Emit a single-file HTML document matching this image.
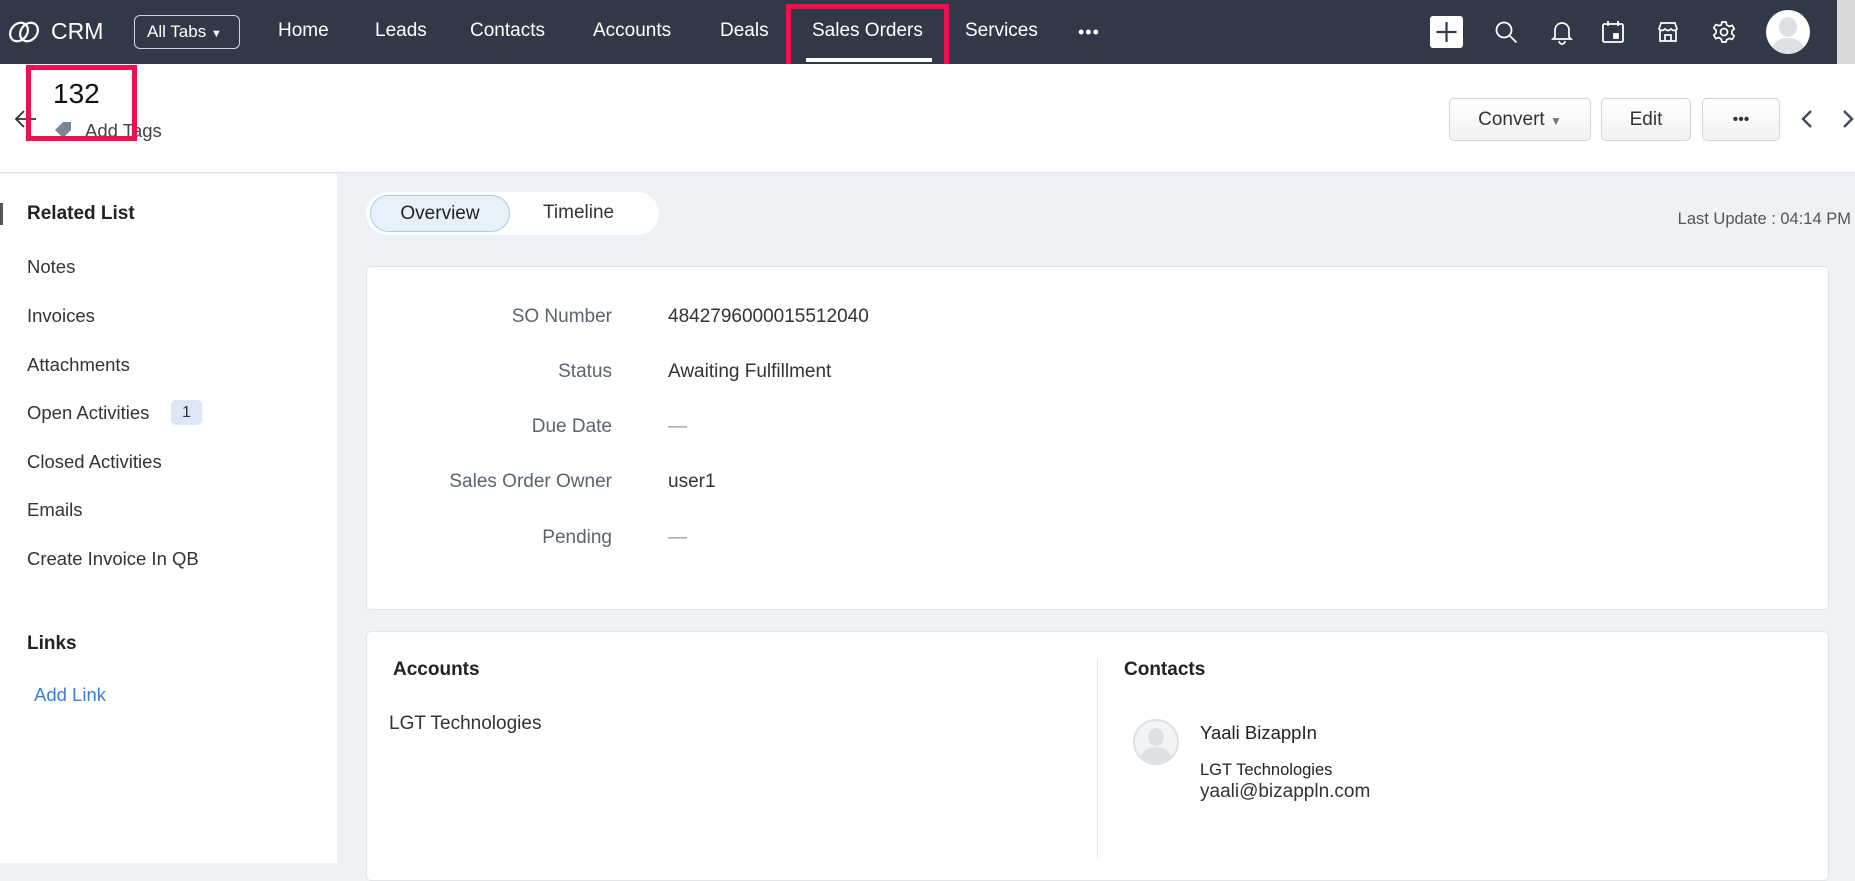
<!DOCTYPE html>
<html><head><meta charset="utf-8"><style>
*{margin:0;padding:0;box-sizing:border-box}
body{width:1855px;height:863px;overflow:hidden;background:#eef1f5;font-family:"Liberation Sans",sans-serif;color:#222;position:relative}
.a{position:absolute;white-space:nowrap}
.top{position:absolute;left:0;top:0;width:1855px;height:64px;background:#313949}
.nav{color:#fff;font-size:19px;top:20px}
.hdr{position:absolute;left:0;top:64px;width:1855px;height:109px;background:#fff;border-bottom:1px solid #dfe3e8}
.side{position:absolute;left:0;top:174px;width:337px;height:689px;background:#fff}
.si{left:27px;font-size:18.5px;color:#333}
.btn{position:absolute;top:98px;height:43px;border:1px solid #cfd4da;border-radius:5px;background:linear-gradient(#fff,#f0f2f4);font-size:19px;color:#333;text-align:center;line-height:41px}
.card{position:absolute;background:#fff;border:1px solid #e1e5ea;border-radius:5px}
.lb{font-size:19px;color:#5c6370;right:1243px;text-align:right}
.vl{font-size:19px;color:#333;left:668px}
</style></head><body>
<div class="top"></div>
<svg class="a" style="left:8px;top:19px" width="32" height="26" viewBox="0 0 32 26"><g fill="none" stroke="#fff" stroke-width="2.2"><ellipse cx="11" cy="13" rx="8" ry="10" transform="rotate(40 11 13)"/><ellipse cx="21" cy="13" rx="8" ry="10" transform="rotate(40 21 13)"/></g></svg>
<div class="a" style="left:51px;top:18px;color:#fff;font-size:23px">CRM</div>
<div class="a" style="left:134px;top:15px;width:106px;height:34px;border:1px solid #cfd4da;border-radius:6px;color:#fff;font-size:17px;line-height:32px;padding-left:12px">All Tabs <span style="font-size:11px">▼</span></div>
<div class="a nav" style="left:278px">Home</div>
<div class="a nav" style="left:375px">Leads</div>
<div class="a nav" style="left:470px">Contacts</div>
<div class="a nav" style="left:593px">Accounts</div>
<div class="a nav" style="left:720px">Deals</div>
<div class="a nav" style="left:812px">Sales Orders</div>
<div class="a" style="left:806px;top:58px;width:126px;height:4px;background:#fff"></div>
<div class="a nav" style="left:965px">Services</div>
<div class="a nav" style="left:1078px;top:22px;font-size:18px;letter-spacing:1px">•••</div>
<div class="a" style="left:786px;top:4px;width:163px;height:69px;border:5px solid #f0104f"></div>
<div class="a" style="left:1430px;top:16px;width:33px;height:32px;background:#fff;border-radius:3px"></div>
<svg class="a" style="left:1430px;top:16px" width="33" height="32"><path d="M16.5 6v20M6.5 16h20" stroke="#313949" stroke-width="2.2"/></svg>
<svg class="a" style="left:1494px;top:20px" width="26" height="26" fill="none" stroke="#fff" stroke-width="1.8"><circle cx="10" cy="10" r="7.5"/><path d="M15.5 15.5l7 7"/></svg>
<svg class="a" style="left:1550px;top:19px" width="24" height="26" fill="none" stroke="#fff" stroke-width="1.7"><path d="M5 18V11a7 7 0 0 1 14 0v7l2 2H3z"/><path d="M9 22a3 3 0 0 0 6 0"/></svg>
<svg class="a" style="left:1601px;top:19px" width="24" height="26" fill="none" stroke="#fff" stroke-width="1.8"><rect x="2" y="5" width="20" height="18" rx="1.5"/><path d="M7 2v5M17 2v5"/><rect x="13" y="15" width="4" height="4" fill="#fff"/></svg>
<svg class="a" style="left:1656px;top:20px" width="24" height="24" fill="none" stroke="#fff" stroke-width="1.7"><path d="M3 9l2-6h14l2 6q-3 3-6 0q-3 3-6 0q-3 3-6 0zM4 10v11h16V10M9 21v-6h6v6"/></svg>
<svg class="a" style="left:1712px;top:20px" width="24" height="24" fill="none" stroke="#fff" stroke-width="1.7"><circle cx="12" cy="12" r="3.5"/><path d="M10 2h4l.7 3 2.5 1.4 3-1 2 3.4-2.3 2.2v2.8l2.3 2.2-2 3.4-3-1-2.5 1.4L14 22h-4l-.7-3-2.5-1.4-3 1-2-3.4 2.3-2.2v-2.8L1.8 8l2-3.4 3 1L9.3 5z"/></svg>
<div class="a" style="left:1766px;top:10px;width:44px;height:44px;border-radius:50%;background:#fff;overflow:hidden"><div style="position:absolute;left:13px;top:7px;width:18px;height:20px;border-radius:50%;background:#dde0e5"></div><div style="position:absolute;left:6px;top:28px;width:32px;height:24px;border-radius:50%;background:#dde0e5"></div></div>
<div class="a" style="left:1837px;top:0;width:18px;height:64px;background:#d8d9db"></div>

<div class="hdr"></div>
<svg class="a" style="left:14px;top:108px" width="26" height="22" fill="none" stroke="#333" stroke-width="1.8"><path d="M10 3l-8 8 8 8M2 11h20"/></svg>
<div class="a" style="left:53px;top:78px;font-size:28px;color:#111">132</div>
<svg class="a" style="left:53px;top:120px" width="22" height="20"><path d="M2 10l8-8h8v8l-8 8z" fill="#7b8794"/></svg>
<div class="a" style="left:85px;top:120px;font-size:18.5px;color:#444">Add Tags</div>
<div class="a" style="left:26px;top:65px;width:111px;height:76px;border:5px solid #f0104f"></div>
<div class="btn" style="left:1449px;width:142px">Convert <span style="font-size:12px;color:#777">▼</span></div>
<div class="btn" style="left:1601px;width:90px">Edit</div>
<div class="btn" style="left:1702px;width:78px;font-size:16px">•••</div>
<svg class="a" style="left:1799px;top:108px" width="16" height="22" fill="none" stroke="#3c4a5a" stroke-width="2.4"><path d="M12 3l-8 8 8 8"/></svg>
<svg class="a" style="left:1840px;top:108px" width="16" height="22" fill="none" stroke="#3c4a5a" stroke-width="2.4"><path d="M4 3l8 8-8 8"/></svg>

<div class="side"></div>
<div class="a" style="left:0;top:203px;width:3px;height:22px;background:#555"></div>
<div class="a si" style="top:203px;font-weight:bold;color:#222;font-size:19px">Related List</div>
<div class="a si" style="top:256px">Notes</div>
<div class="a si" style="top:305px">Invoices</div>
<div class="a si" style="top:354px">Attachments</div>
<div class="a si" style="top:402px">Open Activities</div>
<div class="a" style="left:171px;top:400px;width:31px;height:25px;border-radius:5px;background:#dde6f5;font-size:16px;text-align:center;line-height:25px;color:#333">1</div>
<div class="a si" style="top:451px">Closed Activities</div>
<div class="a si" style="top:499px">Emails</div>
<div class="a si" style="top:548px">Create Invoice In QB</div>
<div class="a si" style="top:633px;font-weight:bold;color:#222;font-size:19px">Links</div>
<div class="a si" style="left:34px;top:684px;color:#3a7fd5">Add Link</div>

<div class="a" style="left:366px;top:192px;width:293px;height:43px;border-radius:22px;background:#fff"></div>
<div class="a" style="left:370px;top:195px;width:140px;height:37px;border-radius:19px;background:#e6f1fb;border:1px solid #a9cdf0;font-size:19px;text-align:center;line-height:35px;color:#222">Overview</div>
<div class="a" style="left:543px;top:202px;font-size:19px;color:#333">Timeline</div>
<div class="a" style="right:4px;top:210px;font-size:16.5px;color:#555">Last Update : 04:14 PM</div>

<div class="card" style="left:366px;top:266px;width:1463px;height:344px"></div>
<div class="a lb" style="top:306px">SO Number</div><div class="a vl" style="top:306px">4842796000015512040</div>
<div class="a lb" style="top:361px">Status</div><div class="a vl" style="top:361px">Awaiting Fulfillment</div>
<div class="a lb" style="top:416px">Due Date</div><div class="a vl" style="top:416px;color:#999">—</div>
<div class="a lb" style="top:471px">Sales Order Owner</div><div class="a vl" style="top:471px">user1</div>
<div class="a lb" style="top:527px">Pending</div><div class="a vl" style="top:527px;color:#999">—</div>

<div class="card" style="left:366px;top:631px;width:1463px;height:250px"></div>
<div class="a" style="left:1097px;top:658px;width:1px;height:200px;background:#e8ebef"></div>
<div class="a" style="left:393px;top:659px;font-size:19px;font-weight:bold;color:#222">Accounts</div>
<div class="a" style="left:389px;top:713px;font-size:19px;color:#333">LGT Technologies</div>
<div class="a" style="left:1124px;top:659px;font-size:19px;font-weight:bold;color:#222">Contacts</div>
<div class="a" style="left:1133px;top:719px;width:46px;height:46px;border-radius:50%;border:2px solid #dde0e5;background:#f3f4f6;overflow:hidden"><div style="position:absolute;left:13px;top:7px;width:16px;height:18px;border-radius:50%;background:#dde0e5"></div><div style="position:absolute;left:6px;top:26px;width:30px;height:22px;border-radius:50%;background:#dde0e5"></div></div>
<div class="a" style="left:1200px;top:722px;font-size:18.5px;color:#222">Yaali BizappIn</div>
<div class="a" style="left:1200px;top:761px;font-size:16.5px;color:#222">LGT Technologies</div>
<div class="a" style="left:1200px;top:781px;font-size:19px;color:#333">yaali@bizappln.com</div>
</body></html>
